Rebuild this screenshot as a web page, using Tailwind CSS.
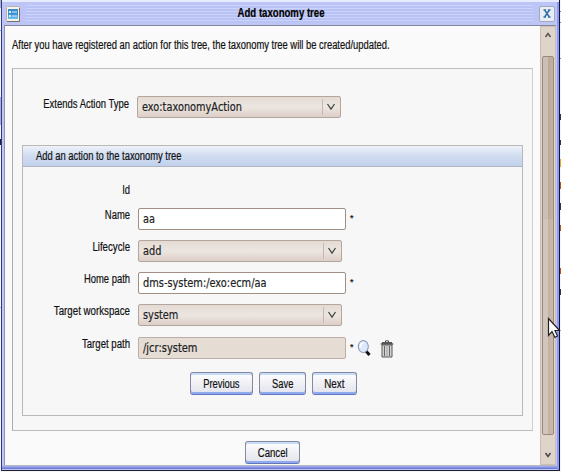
<!DOCTYPE html>
<html lang="en">
<head>
<meta charset="utf-8">
<title>Add taxonomy tree</title>
<script src="https://cdn.jsdelivr.net/npm/@tailwindcss/browser@4"></script>
</head>
<body class="relative h-[472px] w-[561px] overflow-hidden bg-[#f3f4f8] font-['Liberation_Sans',sans-serif] text-[12px] leading-[14px] text-[#111] whitespace-nowrap [-webkit-text-stroke:0.2px]">
<svg class="absolute inset-0" width="561" height="472" aria-hidden="true">
  <path d="M0 0h1v8H0zM0 30h1v1H0zM0 97h1v28H0zM0 307h1v1H0z" fill="#aeb4c6"/>
  <path d="M0 139h1v6H0z" fill="#222"/>
  <path d="M560 114h1v6h-1zM560 140h1v5h-1zM560 203h1v7h-1zM560 289h1v6h-1z" fill="#333"/>
  <path d="M560 159h1v8h-1z" fill="#f0a020"/><path d="M560 182h1v7h-1zM560 225h1v6h-1zM560 268h1v6h-1z" fill="#c05010"/>
  <path d="M560 11h1v1h-1zM560 22h1v1h-1zM560 58h1v1h-1z" fill="#888"/>
</svg>
<div class="relative ml-px flex h-[471px] w-[559px] flex-col border-r border-b border-l border-r-[#141434] border-b-[#20202c] border-l-[#30398a] bg-[#bcc5f5]">
  <header class="flex h-[25px] shrink-0 items-center border-t-2 border-[#e8ecff] pr-[5px] pl-[4px]">
    <svg width="14" height="16" viewBox="0 0 14 16" class="shrink-0">
      <defs><linearGradient id="ic" x2="0" y2="1"><stop stop-color="#4088c4"/><stop offset=".5" stop-color="#3c91ce"/><stop offset="1" stop-color="#70c1ee"/></linearGradient></defs>
      <rect x=".5" y=".5" width="13" height="15" rx="1" fill="#f6f3ec" stroke="#b5b1ad"/>
      <path d="M1 15.500h12.500V2" fill="none" stroke="#777066"/>
      <rect x="2" y="3" width="10" height="10" fill="url(#ic)"/>
      <path d="M3 5h2v2H3zM6 5.500h5v1H6zM3 9h2v2H3zM6 9.500h5v1H6z" fill="#d5efff"/>
    </svg>
    <div class="mx-[6px] flex h-[17px] flex-1 items-center justify-center bg-[repeating-linear-gradient(to_bottom,#cdd4fa_0px,#cdd4fa_1px,#b9c2f4_1px,#b9c2f4_3px)]">
      <h1 class="scale-x-[0.8] pb-[1px] pl-[3px] font-bold text-black">Add taxonomy tree</h1>
    </div>
    <button class="mr-[-1px] flex size-[16px] items-center justify-center rounded-[2px] border border-[#a2a9bd] bg-[#e9edf4]" aria-label="Close">
      <svg width="8" height="9" viewBox="0 0 8 9"><path d="M.5 1h2.500M5 1h2.500M.5 8h2.500M5 8h2.500M2 1.500l4 6M6 1.500l-4 6" stroke="#2c6fa6" stroke-width="1.500" fill="none"/></svg>
    </button>
  </header>
  <div class="ml-[2px] mr-[3px] flex h-[441px] border-t border-b border-l border-t-[#85879a] border-b-[#b7b8bd] border-l-[#8f93ad] bg-[#fafafa]">
    <main class="flex flex-1 flex-col pl-[7px]">
      <p class="mt-[12px] w-0 origin-left scale-x-[0.783]">After you have registered an action for this tree, the taxonomy tree will be created/updated.</p>
      <section class="mt-[16px] h-[363px] w-[521px] border border-t-[#bdbdbd] border-r-[#d0d0d0] border-b-[#bbb] border-l-[#aaa] bg-[#f7f7f7] pl-[9px]">
        <div class="flex pt-[27px]">
          <label class="w-[107px] origin-right scale-x-[0.79] pt-[1px] text-right"><span class="float-right">Extends Action Type</span></label>
          <div class="ml-[8px] flex h-[22px] w-[204px] items-center rounded-[2px] border border-[#b5a69d] bg-linear-to-b from-[#e4dad3] via-[#ece6e1] to-[#dccfc7] pl-[4px] font-['DejaVu_Sans',sans-serif] text-[11.5px] text-[#222]">
            <span class="w-0 flex-1 origin-left scale-x-[0.85]">exo:taxonomyAction</span>
            <svg width="18" height="18" viewBox="0 0 18 18"><path d="M.5 1v16" stroke="#c5b8b0"/><path d="M5.500 6l3.500 5 3.500-5" fill="none" stroke="#444" stroke-width="1.300"/></svg>
          </div>
        </div>
        <section class="mt-[27px] h-[271px] w-[501px] border border-[#b9b9b9] bg-[#f7f7f7]">
          <h2 class="flex h-[21px] items-center border-b border-[#b0b5c0] bg-linear-to-b from-[#edf2fa] via-[#d0dcf0] via-50% to-[#c1d1ec] pl-[13px]"><span class="w-0 origin-left scale-x-[0.782]">Add an action to the taxonomy tree</span></h2>
          <div class="grid grid-cols-[107px_1fr] gap-x-[8px] pt-[16px]">
            <label class="h-[25px] origin-right scale-x-[0.785] text-right">Id</label><span></span>

            <label class="h-[32px] origin-right scale-x-[0.785] text-right">Name</label>
            <div class="flex h-[32px]">
              <div class="flex h-[22px] w-[208px] items-center rounded-[2px] border border-[#a18f83] bg-white pl-[4px] font-['DejaVu_Sans',sans-serif] text-[11.5px] text-[#222]"><span class="w-0 origin-left scale-x-[0.85]">aa</span></div>
              <span class="ml-[4px] pt-[3px] text-[9px]">*</span>
            </div>

            <label class="h-[32px] origin-right scale-x-[0.805] text-right">Lifecycle</label>
            <div class="flex h-[22px] w-[204px] items-center rounded-[2px] border border-[#b5a69d] bg-linear-to-b from-[#e4dad3] via-[#ece6e1] to-[#dccfc7] pl-[4px] font-['DejaVu_Sans',sans-serif] text-[11.5px] text-[#222]">
              <span class="w-0 flex-1 origin-left scale-x-[0.85]">add</span>
              <svg width="18" height="18" viewBox="0 0 18 18"><path d="M.5 1v16" stroke="#c5b8b0"/><path d="M5.500 6l3.500 5 3.500-5" fill="none" stroke="#444" stroke-width="1.300"/></svg>
            </div>

            <label class="h-[32px] origin-right scale-x-[0.785] text-right">Home path</label>
            <div class="flex h-[32px]">
              <div class="flex h-[22px] w-[208px] items-center rounded-[2px] border border-[#a18f83] bg-white pl-[4px] font-['DejaVu_Sans',sans-serif] text-[11.5px] text-[#222]"><span class="w-0 origin-left scale-x-[0.853]">dms-system:/exo:ecm/aa</span></div>
              <span class="ml-[4px] pt-[3px] text-[9px]">*</span>
            </div>

            <label class="h-[33px] origin-right scale-x-[0.81] text-right"><span class="float-right">Target workspace</span></label>
            <div class="flex h-[22px] w-[204px] items-center rounded-[2px] border border-[#b5a69d] bg-linear-to-b from-[#e4dad3] via-[#ece6e1] to-[#dccfc7] pl-[4px] font-['DejaVu_Sans',sans-serif] text-[11.5px] text-[#222]">
              <span class="w-0 flex-1 origin-left scale-x-[0.85]">system</span>
              <svg width="18" height="18" viewBox="0 0 18 18"><path d="M.5 1v16" stroke="#c5b8b0"/><path d="M5.500 6l3.500 5 3.500-5" fill="none" stroke="#444" stroke-width="1.300"/></svg>
            </div>

            <label class="h-[35px] origin-right scale-x-[0.8] text-right">Target path</label>
            <div class="flex h-[22px]">
              <div class="flex h-[22px] w-[208px] shrink-0 items-center rounded-[2px] border border-[#bbaea5] bg-[#e5dcd4] pl-[4px] font-['DejaVu_Sans',sans-serif] text-[11.5px] text-[#222]"><span class="w-0 origin-left scale-x-[0.86]">/jcr:system</span></div>
              <span class="ml-[4px] w-[7px] pt-[3px] text-[9px]">*</span>
              <svg width="14" height="18" viewBox="0 0 14 18" class="mt-[2px] shrink-0"><path d="M8.500 11.500l4 4.500" stroke="#111" stroke-width="3"/><ellipse cx="6.300" cy="7.500" rx="5" ry="6" fill="#dce9fb" stroke="#8b98b4" stroke-width="1.100"/><path d="M3.500 8.500c0-3 1.500-4.500 3-4.500" stroke="#fff" stroke-width="1.500" fill="none"/></svg>
              <svg width="14" height="18" viewBox="0 0 14 18" class="mt-[3px] ml-[9px] shrink-0"><path d="M2 5h10v12H2z" fill="#ddd" stroke="#555"/><path d="M4.500 6v10M9.500 6v10" stroke="#666" stroke-width="1.200"/><path d="M7 6v10M11.500 6v10" stroke="#999"/><path d="M.7 4h12.600M2 2.600h10" stroke="#555" stroke-width="1.300"/><path d="M5.500 2V.8h3V2" fill="none" stroke="#555"/></svg>
            </div>
          </div>
          <div class="flex h-[23px] gap-[6px] pl-[167px]">
            <button class="h-[23px] w-[63px] rounded-[3px] border border-[#8489a0] border-b-[#6475bd] bg-linear-to-b from-white to-[#e1e2ec] shadow-[inset_0_2px_0_#c9dcf7,inset_0_-2px_0_#90aaf0]"><span class="inline-block origin-center scale-x-[0.78]">Previous</span></button>
            <button class="h-[23px] w-[47px] rounded-[3px] border border-[#8489a0] border-b-[#6475bd] bg-linear-to-b from-white to-[#e1e2ec] shadow-[inset_0_2px_0_#c9dcf7,inset_0_-2px_0_#90aaf0]"><span class="inline-block origin-center scale-x-[0.78]">Save</span></button>
            <button class="h-[23px] w-[45px] rounded-[3px] border border-[#8489a0] border-b-[#6475bd] bg-linear-to-b from-white to-[#e1e2ec] shadow-[inset_0_2px_0_#c9dcf7,inset_0_-2px_0_#90aaf0]"><span class="inline-block origin-center scale-x-[0.82]">Next</span></button>
          </div>
        </section>
      </section>
      <button class="mt-[10px] ml-[233px] h-[23px] w-[55px] rounded-[3px] border border-[#8489a0] border-b-[#6475bd] bg-linear-to-b from-white to-[#e1e2ec] shadow-[inset_0_2px_0_#c9dcf7,inset_0_-2px_0_#90aaf0]"><span class="inline-block origin-center scale-x-[0.8]">Cancel</span></button>
    </main>
    <div class="flex w-[16px] shrink-0 flex-col items-center border border-[#cbbfb3] bg-[#ded4c9]">
      <svg width="12" height="29" viewBox="0 0 12 29"><path d="M3.500 10L6 6.500 8.500 10" fill="none" stroke="#555" stroke-width="1.500"/></svg>
      <div class="h-[379px] w-[12px] rounded-[2px] border border-[#9c8878] bg-[linear-gradient(to_right,#cdbfb3_0px,#cdbfb3_5px,#bba99b_5px,#c3b2a5_10px)]"><div class="mt-[162px] h-[215px] bg-white/10"></div></div>
      <svg width="12" height="29" viewBox="0 0 12 29"><path d="M3.500 18L6 21.500 8.500 18" fill="none" stroke="#444" stroke-width="1.500"/></svg>
    </div>
  </div>
  <div class="mr-px h-[3px] bg-linear-to-b from-[#a9b2f4] to-[#646fd0]"></div>
  <div class="absolute top-[2px] right-0 h-[468px] w-[2px] bg-[#8f9af5]"></div>
</div>
<svg class="absolute top-[317px] left-[547px]" width="14" height="23" viewBox="0 0 14 23"><path d="M1.500 1.500v17l3.500-4 3 6 2.500-1.500-2.500-5.500h4.500z" fill="#fff" stroke="#222" stroke-width="1.200"/></svg>
</body>
</html>
